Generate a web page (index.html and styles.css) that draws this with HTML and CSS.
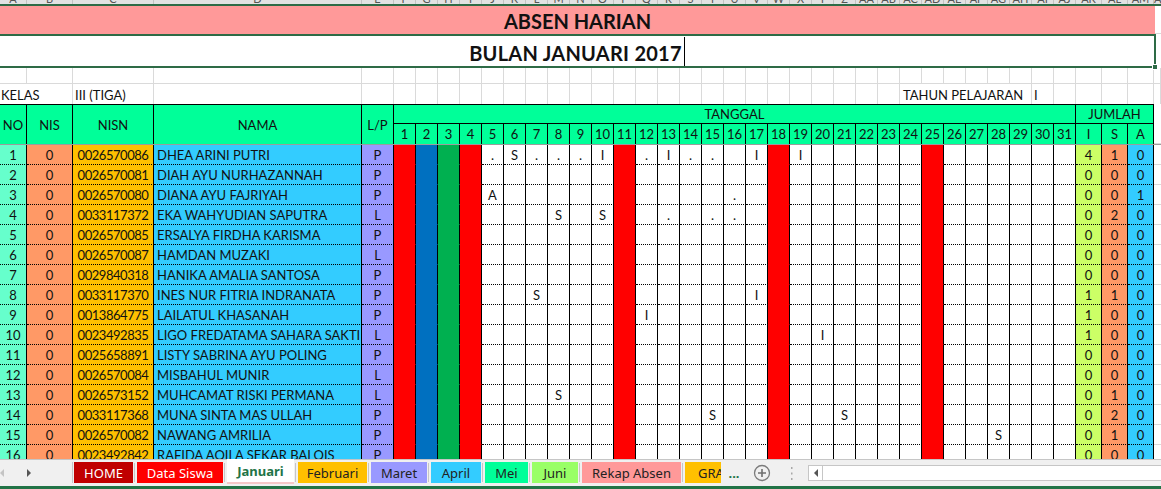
FILE: index.html
```html
<!DOCTYPE html>
<html>
<head>
<meta charset="utf-8">
<link rel="stylesheet" href="styles.css">
</head>
<body>
<div class="sheet">
  <div class="grid colhdr">
    <span>A</span><span>B</span><span>C</span><span>D</span><span>E</span><span>F</span><span>G</span><span>H</span><span>I</span><span>J</span>
    <span>K</span><span>L</span><span>M</span><span>N</span><span>O</span><span>P</span><span>Q</span><span>R</span><span>S</span><span>T</span>
    <span>U</span><span>V</span><span>W</span><span>X</span><span>Y</span><span>Z</span><span>AA</span><span>AB</span><span>AC</span><span>AD</span>
    <span>AE</span><span>AF</span><span>AG</span><span>AH</span><span>AI</span><span>AJ</span><span>AK</span><span>AL</span><span>AM</span><span>AN</span>
  </div>
  <div class="title"><div class="band">ABSEN HARIAN</div><div class="rest"></div></div>
  <div class="sub">BULAN JANUARI 2017<span class="caret"></span><span class="handle"></span></div>
  <div class="grid blank">
    <span></span><span></span><span></span><span></span><span></span><span></span><span></span><span></span><span></span><span></span>
    <span></span><span></span><span></span><span></span><span></span><span></span><span></span><span></span><span></span><span></span>
    <span></span><span></span><span></span><span></span><span></span><span></span><span></span><span></span><span></span><span></span>
    <span></span><span></span><span></span><span></span><span></span><span></span><span></span><span></span><span></span><span></span>
  </div>
  <div class="grid kelas">
    <span class="c2">KELAS</span><span>III (TIGA)</span><span></span><span></span>
    <span></span><span></span><span></span><span></span><span></span><span></span><span></span><span></span><span></span><span></span>
    <span></span><span></span><span></span><span></span><span></span><span></span><span></span><span></span><span></span><span></span>
    <span></span><span></span><span></span>
    <span class="c6">TAHUN PELAJARAN</span><span>I</span><span></span>
    <span></span><span></span><span></span><span></span>
  </div>
  <div class="grid head">
    <span class="h m">NO</span><span class="h m">NIS</span><span class="h m">NISN</span><span class="h m">NAMA</span><span class="h m">L/P</span>
    <span class="h tg">TANGGAL</span><span class="h jm">JUMLAH</span><span class="hf"></span>
    <span class="h">1</span><span class="h">2</span><span class="h">3</span><span class="h">4</span><span class="h">5</span><span class="h">6</span><span class="h">7</span><span class="h">8</span><span class="h">9</span><span class="h">10</span>
    <span class="h">11</span><span class="h">12</span><span class="h">13</span><span class="h">14</span><span class="h">15</span><span class="h">16</span><span class="h">17</span><span class="h">18</span><span class="h">19</span><span class="h">20</span>
    <span class="h">21</span><span class="h">22</span><span class="h">23</span><span class="h">24</span><span class="h">25</span><span class="h">26</span><span class="h">27</span><span class="h">28</span><span class="h">29</span><span class="h">30</span>
    <span class="h">31</span><span class="h">I</span><span class="h">S</span><span class="h">A</span>
  </div>
  <div class="freeze"></div>

  <div class="grid row"><span class="no">1</span><span class="nis">0</span><span class="nisn">0026570086</span><span class="nm">DHEA ARINI PUTRI</span><span class="lp">P</span>
    <i></i><i></i><i></i><i></i><i>.</i><i>S</i><i>.</i><i>.</i><i>.</i><i>I</i>
    <i></i><i>.</i><i>I</i><i>.</i><i>.</i><i></i><i>I</i><i></i><i>I</i><i></i>
    <i></i><i></i><i></i><i></i><i></i><i></i><i></i><i></i><i></i><i></i>
    <i></i>
    <span class="ti">4</span><span class="ts">1</span><span class="ta">0</span><span class="f"></span></div>

  <div class="grid row"><span class="no">2</span><span class="nis">0</span><span class="nisn">0026570081</span><span class="nm">DIAH AYU NURHAZANNAH</span><span class="lp">P</span>
    <i></i><i></i><i></i><i></i><i></i><i></i><i></i><i></i><i></i><i></i>
    <i></i><i></i><i></i><i></i><i></i><i></i><i></i><i></i><i></i><i></i>
    <i></i><i></i><i></i><i></i><i></i><i></i><i></i><i></i><i></i><i></i>
    <i></i>
    <span class="ti">0</span><span class="ts">0</span><span class="ta">0</span><span class="f"></span></div>

  <div class="grid row"><span class="no">3</span><span class="nis">0</span><span class="nisn">0026570080</span><span class="nm">DIANA AYU FAJRIYAH</span><span class="lp">P</span>
    <i></i><i></i><i></i><i></i><i>A</i><i></i><i></i><i></i><i></i><i></i>
    <i></i><i></i><i></i><i></i><i></i><i>.</i><i></i><i></i><i></i><i></i>
    <i></i><i></i><i></i><i></i><i></i><i></i><i></i><i></i><i></i><i></i>
    <i></i>
    <span class="ti">0</span><span class="ts">0</span><span class="ta">1</span><span class="f"></span></div>

  <div class="grid row"><span class="no">4</span><span class="nis">0</span><span class="nisn">0033117372</span><span class="nm">EKA WAHYUDIAN SAPUTRA</span><span class="lp">L</span>
    <i></i><i></i><i></i><i></i><i></i><i></i><i></i><i>S</i><i></i><i>S</i>
    <i></i><i></i><i>.</i><i></i><i>.</i><i>.</i><i></i><i></i><i></i><i></i>
    <i></i><i></i><i></i><i></i><i></i><i></i><i></i><i></i><i></i><i></i>
    <i></i>
    <span class="ti">0</span><span class="ts">2</span><span class="ta">0</span><span class="f"></span></div>

  <div class="grid row"><span class="no">5</span><span class="nis">0</span><span class="nisn">0026570085</span><span class="nm">ERSALYA FIRDHA KARISMA</span><span class="lp">P</span>
    <i></i><i></i><i></i><i></i><i></i><i></i><i></i><i></i><i></i><i></i>
    <i></i><i></i><i></i><i></i><i></i><i></i><i></i><i></i><i></i><i></i>
    <i></i><i></i><i></i><i></i><i></i><i></i><i></i><i></i><i></i><i></i>
    <i></i>
    <span class="ti">0</span><span class="ts">0</span><span class="ta">0</span><span class="f"></span></div>

  <div class="grid row"><span class="no">6</span><span class="nis">0</span><span class="nisn">0026570087</span><span class="nm">HAMDAN MUZAKI</span><span class="lp">L</span>
    <i></i><i></i><i></i><i></i><i></i><i></i><i></i><i></i><i></i><i></i>
    <i></i><i></i><i></i><i></i><i></i><i></i><i></i><i></i><i></i><i></i>
    <i></i><i></i><i></i><i></i><i></i><i></i><i></i><i></i><i></i><i></i>
    <i></i>
    <span class="ti">0</span><span class="ts">0</span><span class="ta">0</span><span class="f"></span></div>

  <div class="grid row"><span class="no">7</span><span class="nis">0</span><span class="nisn">0029840318</span><span class="nm">HANIKA AMALIA SANTOSA</span><span class="lp">P</span>
    <i></i><i></i><i></i><i></i><i></i><i></i><i></i><i></i><i></i><i></i>
    <i></i><i></i><i></i><i></i><i></i><i></i><i></i><i></i><i></i><i></i>
    <i></i><i></i><i></i><i></i><i></i><i></i><i></i><i></i><i></i><i></i>
    <i></i>
    <span class="ti">0</span><span class="ts">0</span><span class="ta">0</span><span class="f"></span></div>

  <div class="grid row"><span class="no">8</span><span class="nis">0</span><span class="nisn">0033117370</span><span class="nm">INES NUR FITRIA INDRANATA</span><span class="lp">P</span>
    <i></i><i></i><i></i><i></i><i></i><i></i><i>S</i><i></i><i></i><i></i>
    <i></i><i></i><i></i><i></i><i></i><i></i><i>I</i><i></i><i></i><i></i>
    <i></i><i></i><i></i><i></i><i></i><i></i><i></i><i></i><i></i><i></i>
    <i></i>
    <span class="ti">1</span><span class="ts">1</span><span class="ta">0</span><span class="f"></span></div>

  <div class="grid row"><span class="no">9</span><span class="nis">0</span><span class="nisn">0013864775</span><span class="nm">LAILATUL KHASANAH</span><span class="lp">P</span>
    <i></i><i></i><i></i><i></i><i></i><i></i><i></i><i></i><i></i><i></i>
    <i></i><i>I</i><i></i><i></i><i></i><i></i><i></i><i></i><i></i><i></i>
    <i></i><i></i><i></i><i></i><i></i><i></i><i></i><i></i><i></i><i></i>
    <i></i>
    <span class="ti">1</span><span class="ts">0</span><span class="ta">0</span><span class="f"></span></div>

  <div class="grid row"><span class="no">10</span><span class="nis">0</span><span class="nisn">0023492835</span><span class="nm">LIGO FREDATAMA SAHARA SAKTI</span><span class="lp">L</span>
    <i></i><i></i><i></i><i></i><i></i><i></i><i></i><i></i><i></i><i></i>
    <i></i><i></i><i></i><i></i><i></i><i></i><i></i><i></i><i></i><i>I</i>
    <i></i><i></i><i></i><i></i><i></i><i></i><i></i><i></i><i></i><i></i>
    <i></i>
    <span class="ti">1</span><span class="ts">0</span><span class="ta">0</span><span class="f"></span></div>

  <div class="grid row"><span class="no">11</span><span class="nis">0</span><span class="nisn">0025658891</span><span class="nm">LISTY SABRINA AYU POLING</span><span class="lp">P</span>
    <i></i><i></i><i></i><i></i><i></i><i></i><i></i><i></i><i></i><i></i>
    <i></i><i></i><i></i><i></i><i></i><i></i><i></i><i></i><i></i><i></i>
    <i></i><i></i><i></i><i></i><i></i><i></i><i></i><i></i><i></i><i></i>
    <i></i>
    <span class="ti">0</span><span class="ts">0</span><span class="ta">0</span><span class="f"></span></div>

  <div class="grid row"><span class="no">12</span><span class="nis">0</span><span class="nisn">0026570084</span><span class="nm">MISBAHUL MUNIR</span><span class="lp">L</span>
    <i></i><i></i><i></i><i></i><i></i><i></i><i></i><i></i><i></i><i></i>
    <i></i><i></i><i></i><i></i><i></i><i></i><i></i><i></i><i></i><i></i>
    <i></i><i></i><i></i><i></i><i></i><i></i><i></i><i></i><i></i><i></i>
    <i></i>
    <span class="ti">0</span><span class="ts">0</span><span class="ta">0</span><span class="f"></span></div>

  <div class="grid row"><span class="no">13</span><span class="nis">0</span><span class="nisn">0026573152</span><span class="nm">MUHCAMAT RISKI PERMANA</span><span class="lp">L</span>
    <i></i><i></i><i></i><i></i><i></i><i></i><i></i><i>S</i><i></i><i></i>
    <i></i><i></i><i></i><i></i><i></i><i></i><i></i><i></i><i></i><i></i>
    <i></i><i></i><i></i><i></i><i></i><i></i><i></i><i></i><i></i><i></i>
    <i></i>
    <span class="ti">0</span><span class="ts">1</span><span class="ta">0</span><span class="f"></span></div>

  <div class="grid row"><span class="no">14</span><span class="nis">0</span><span class="nisn">0033117368</span><span class="nm">MUNA SINTA MAS ULLAH</span><span class="lp">P</span>
    <i></i><i></i><i></i><i></i><i></i><i></i><i></i><i></i><i></i><i></i>
    <i></i><i></i><i></i><i></i><i>S</i><i></i><i></i><i></i><i></i><i></i>
    <i>S</i><i></i><i></i><i></i><i></i><i></i><i></i><i></i><i></i><i></i>
    <i></i>
    <span class="ti">0</span><span class="ts">2</span><span class="ta">0</span><span class="f"></span></div>

  <div class="grid row"><span class="no">15</span><span class="nis">0</span><span class="nisn">0026570082</span><span class="nm">NAWANG AMRILIA</span><span class="lp">P</span>
    <i></i><i></i><i></i><i></i><i></i><i></i><i></i><i></i><i></i><i></i>
    <i></i><i></i><i></i><i></i><i></i><i></i><i></i><i></i><i></i><i></i>
    <i></i><i></i><i></i><i></i><i></i><i></i><i></i><i>S</i><i></i><i></i>
    <i></i>
    <span class="ti">0</span><span class="ts">1</span><span class="ta">0</span><span class="f"></span></div>

  <div class="grid row"><span class="no">16</span><span class="nis">0</span><span class="nisn">0023492842</span><span class="nm">RAFIDA AQILA SEKAR BALQIS</span><span class="lp">P</span>
    <i></i><i></i><i></i><i></i><i></i><i></i><i></i><i></i><i></i><i></i>
    <i></i><i></i><i></i><i></i><i></i><i></i><i></i><i></i><i></i><i></i>
    <i></i><i></i><i></i><i></i><i></i><i></i><i></i><i></i><i></i><i></i>
    <i></i>
    <span class="ti">0</span><span class="ts">0</span><span class="ta">0</span><span class="f"></span></div>
</div>

<div class="tabbar">
  <div class="nav"><span class="al"></span><span class="ar"></span></div>
  <span class="vsep"></span>
  <span class="tab home">HOME</span><span class="sp"></span>
  <span class="tab ds">Data Siswa</span><span class="sp"></span>
  <span class="tab on">Januari</span><span class="sp"></span>
  <span class="tab feb">Februari</span><span class="sp"></span>
  <span class="tab mar">Maret</span><span class="sp"></span>
  <span class="tab apr">April</span><span class="sp"></span>
  <span class="tab mei">Mei</span><span class="sp"></span>
  <span class="tab jun">Juni</span><span class="sp"></span>
  <span class="tab rek">Rekap Absen</span><span class="sp"></span>
  <span class="tab gra">GRA</span>
  <span class="more">...</span>
  <span class="plus"><svg width="18" height="18" viewBox="0 0 18 18"><circle cx="9" cy="9" r="7.5" fill="none" stroke="#7b7b7b" stroke-width="1.3"/><path d="M9 5v8M5 9h8" stroke="#6f6f6f" stroke-width="1.6"/></svg></span>
  <span class="vdots"><svg width="3" height="13" viewBox="0 0 3 13"><rect x="1" y="0" width="1.5" height="2" fill="#a8a8a8"/><rect x="1" y="5.5" width="1.5" height="2" fill="#a8a8a8"/><rect x="1" y="11" width="1.5" height="2" fill="#a8a8a8"/></svg></span>
  <div class="hscroll"><span class="sa"></span><span class="sb"></span></div>
</div>
<div class="status"></div>
</body>
</html>
```
FILE: styles.css
```css
* { box-sizing: border-box; margin: 0; padding: 0; }
html, body { width: 1161px; height: 489px; overflow: hidden; background: #fff; }
body { font-family: Lato, "Liberation Sans", sans-serif; font-size: 13px; color: #111; }

.sheet { height: 459px; overflow: hidden; }
.grid {
  display: grid;
  grid-template-columns: 27px 46px 81px 208px 32px repeat(31, 22px) 26px 26px 26px 7px;
}

/* column letter strip */
.colhdr { height: 6px; background: #e2e2e2; border-bottom: 2px solid #2e6b46; overflow: hidden; }
.colhdr span { border-right: 1px solid #c3c3c3; text-align: center; font-size: 11px; line-height: 0; color: #555; margin-top: -1px; }

/* title rows */
.title { display: flex; height: 28px; }
.band {
  width: 1155px; background: #ff9999;
  display: flex; justify-content: center; align-items: flex-end;
  font-weight: 700; font-size: 20px; line-height: 1.2; padding-bottom: 1px;
}
.title .rest { flex: 1; border-bottom: 1px solid #dadada; }
.sub {
  position: relative; width: 1156px; height: 34px;
  border: 2px solid #2e6b46; border-left: 0;
  display: flex; justify-content: center; align-items: flex-end;
  font-weight: 700; font-size: 20px; line-height: 1.2; padding-bottom: 1px; letter-spacing: 0.25px;
}
.caret { width: 1px; height: 29px; background: #000; margin-left: 2px; margin-bottom: -1px; }
.handle { position: absolute; right: -4px; bottom: -4px; width: 6px; height: 6px; background: #2e6b46; border: 1px solid #fff; }

/* blank + kelas rows */
.blank { height: 16px; }
.blank span { border-right: 1px solid #dadada; border-bottom: 1px solid #dadada; }
.kelas { height: 20px; }
.kelas span { border-right: 1px solid #dadada; display: flex; align-items: flex-end; padding: 0 0 1px 2px; white-space: nowrap; }
.kelas .c2 { grid-column: span 2; padding-left: 1px; }
.kelas .c6 { grid-column: span 6; padding-left: 3px; }

/* header */
.head { grid-template-rows: 20px 20px; }
.h { background: #00ff99; border-right: 1px solid #000; display: flex; align-items: center; justify-content: center; }
.h.m { grid-row: span 2; border-top: 1px solid #000; }
.h.tg { grid-column: span 31; border-top: 1px solid #000; border-bottom: 1px solid #000; }
.h.jm { grid-column: span 3; border-top: 1px solid #000; border-bottom: 1px solid #000; }
.hf { grid-row: span 2; border-bottom: 1px solid #dadada; }
.freeze { height: 1px; background: #9c9c9c; }

/* data rows */
.row { height: 20px; }
.row > * {
  border-right: 1px solid #000; border-bottom: 1px dotted #000;
  display: flex; align-items: center; justify-content: center;
  white-space: nowrap; overflow: hidden; font-style: normal;
}
.row > .nm { justify-content: flex-start; padding-left: 3px; }
.row > .nisn { letter-spacing: -0.45px; }
.no { background: #66ffcc; }
.nis { background: #ff9966; }
.nisn { background: #ffc000; }
.nm { background: #33ccff; }
.lp { background: #9999ff; }
.ti { background: #ccff66; }
.ts { background: #ff9966; }
.ta { background: #33ccff; }
.row > .f { border-right: 0; border-bottom: 1px solid #dadada; }
.row > i:nth-of-type(1), .row > i:nth-of-type(4), .row > i:nth-of-type(11),
.row > i:nth-of-type(18), .row > i:nth-of-type(25) { background: #ff0000; border-bottom: 1px solid #ff0000; }
.row > i:nth-of-type(2) { background: #0070c0; border-bottom: 1px solid #0070c0; }
.row > i:nth-of-type(3) { background: #00b050; border-bottom: 1px solid #00b050; }

/* sheet tabs */
.tabbar {
  height: 27px; background: #f0f0f0; border-top: 1px solid #c6c6c6;
  display: flex; align-items: flex-start;
  font-family: "Noto Sans", sans-serif; font-size: 13px;
}
.nav { width: 72px; height: 26px; display: flex; align-items: center; }
.al { width: 0; height: 0; border-top: 4px solid transparent; border-bottom: 4px solid transparent; border-right: 4px solid #c4c4c4; }
.ar { width: 0; height: 0; border-top: 4px solid transparent; border-bottom: 4px solid transparent; border-left: 4px solid #555; margin-left: 23px; }
.vsep { width: 1px; height: 21px; margin: 2px 1px 0 0; background: #c6c6c6; }
.sp { width: 1px; height: 19px; margin: 3px 2px 0 1px; background: #c6c6c6; }
.tab {
  height: 21px; margin-top: 2px; display: flex; align-items: center; justify-content: center;
  white-space: nowrap; overflow: hidden; color: #222;
}
.home { width: 59px; background: #c00000; color: #fff; }
.ds { width: 86px; background: #ff0000; color: #fff; }
.tab.on { width: 67px; height: 25px; margin-top: -1px; background: #fff; color: #217346; font-weight: 700; border-bottom: 2px solid #f5c8c8; }
.feb { width: 69px; background: #ffc000; }
.mar { width: 56px; background: #9999ff; }
.apr { width: 50px; background: #33ccff; }
.mei { width: 43px; background: #00ff99; }
.jun { width: 46px; background: #99ff66; }
.rek { width: 99px; background: #ff9999; }
.gra { width: 36px; background: #ffc000; justify-content: flex-start; padding-left: 13px; }
.more { width: 26px; height: 26px; display: flex; align-items: center; justify-content: center; color: #217346; font-weight: 700; }
.plus { width: 30px; height: 26px; display: flex; align-items: center; justify-content: center; }
.vdots { width: 28px; height: 26px; display: flex; align-items: center; justify-content: center; }
.hscroll { flex: 1; height: 16px; margin: 5px -2px 0 3px; background: #fff; border: 1px solid #c6c6c6; display: flex; align-items: center; }
.sa { width: 0; height: 0; border-top: 4px solid transparent; border-bottom: 4px solid transparent; border-right: 4px solid #555; margin-left: 5px; }
.sb { width: 1px; height: 100%; background: #c6c6c6; margin-left: 4px; }
.status { height: 3px; background: #217346; }
```
